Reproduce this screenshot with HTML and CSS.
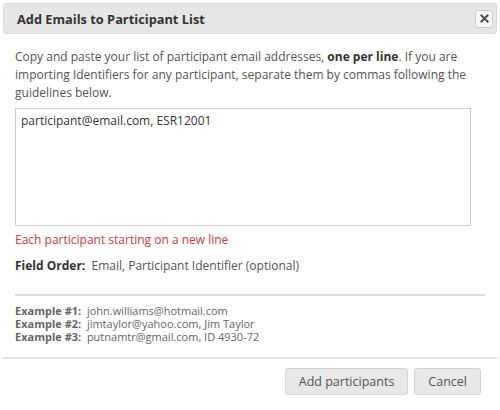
FILE: index.html
```html
<!DOCTYPE html>
<html>
<head>
<meta charset="utf-8">
<link rel="stylesheet" href="styles.css">
</head>
<body>
<div class="dialog">
  <div class="header">
    <h1 class="title">Add Emails to Participant List</h1>
    <button class="close" type="button">
      <svg width="9" height="9" viewBox="0 0 9 9"><path d="M1.5 1.5 L7.5 7.5 M7.5 1.5 L1.5 7.5" stroke="#555" stroke-width="2.2" stroke-linecap="square"/></svg>
    </button>
  </div>
  <div class="body">
    <p class="intro">Copy and paste your list of participant email addresses, <b>one per line</b>. If you are importing Identifiers for any participant, separate them by commas following the guidelines below.</p>
    <div class="textarea">participant@email.com, ESR12001</div>
    <p class="note">Each participant starting on a new line</p>
    <p class="order"><b>Field Order:</b>&nbsp; Email, Participant Identifier (optional)</p>
    <div class="examples">
      <div><b>Example #1:</b>&nbsp; john.williams@hotmail.com</div>
      <div><b>Example #2:</b>&nbsp; jimtaylor@yahoo.com, Jim Taylor</div>
      <div><b>Example #3:</b>&nbsp; putnamtr@gmail.com, ID 4930-72</div>
    </div>
  </div>
  <div class="footer">
    <button class="btn" type="button">Add participants</button>
    <button class="btn" type="button">Cancel</button>
  </div>
</div>
</body>
</html>
```
FILE: styles.css
```css
html, body { margin: 0; padding: 0; background: #fff; }
body { font-family: "Open Sans", sans-serif; color: #555; width: 500px; height: 410px; overflow: hidden; }
.dialog { padding: 3px 3px 0 3px; }
.header {
  height: 31px;
  background: #e6e6e6;
  border: 1px solid #dcdcdc;
  border-radius: 3px;
  display: flex;
  align-items: center;
  justify-content: space-between;
  padding: 0 3px 0 13px;
  box-sizing: border-box;
}
.title { margin: 0; font-size: 12.8px; font-weight: 700; color: #333; }
.close {
  width: 18px; height: 18px; padding: 0;
  border: 1px solid #ccc; border-radius: 3px; background: #f7f7f7;
  display: flex; align-items: center; justify-content: center;
}
.body { padding: 14px 12px 0 12px; }
.intro { margin: 0; font-size: 12px; line-height: 18px; color: #555; }
.intro b { color: #333; }
.textarea {
  margin-top: 6px;
  width: 456px; height: 118px; box-sizing: border-box;
  border: 1px solid #ccc; padding: 4px 5px;
  font-size: 12px; line-height: 16px; color: #333;
}
.note { margin: 6px 0 0 0; font-size: 12px; line-height: 16px; color: #c9403a; }
.order { margin: 10px 0 0 0; font-size: 12px; line-height: 16px; color: #555; }
.order b { color: #333; }
.examples { margin-top: 20px; border-top: 2px solid #ddd; padding-top: 8px; width: 470px; font-size: 11px; line-height: 13px; color: #666; }
.examples b { color: #666; }
.footer {
  margin-top: 14px; border-top: 2px solid #e5e5e5;
  display: flex; justify-content: flex-end; gap: 6px;
  padding: 9px 16px 0 0;
}
.btn {
  font-family: "Open Sans", sans-serif; font-size: 12.5px; color: #555;
  background: #e8e8e8; border: 1px solid #d4d4d4; border-radius: 3px;
  height: 27px; padding: 0 13px;
}
```
